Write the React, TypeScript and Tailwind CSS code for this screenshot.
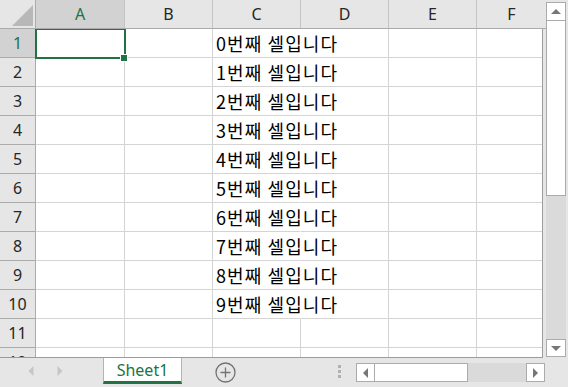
import React from "react";

/* ─── layout constants ───────────────────────────── */
const COLS = ["A", "B", "C", "D", "E", "F"];
const COL_W = ["w-[89px]", "w-[88px]", "w-[88px]", "w-[88px]", "w-[88px]", "w-[65px]"];
const ROWS = Array.from({ length: 12 }, (_, i) => i + 1);

const HEAD_FONT = { fontFamily: '"Noto Sans", "Open Sans", sans-serif' };
const CELL_FONT = { fontFamily: '"Noto Sans CJK KR", "Noto Sans", sans-serif' };

/* ─── small pieces ───────────────────────────────── */
function Tri({ dir, className }: { dir: "up" | "down" | "left" | "right"; className?: string }) {
  const pts = {
    up: "0,6 6,0 12,6",
    down: "0,0 12,0 6,6",
    left: "6,0 6,12 0,6",
    right: "0,0 0,12 6,6",
  }[dir];
  const vb = dir === "up" || dir === "down" ? "0 0 12 6" : "0 0 6 12";
  const size = dir === "up" || dir === "down" ? { width: 12, height: 6 } : { width: 6, height: 12 };
  return (
    <svg viewBox={vb} {...size} className={className}>
      <polygon points={pts} fill="currentColor" />
    </svg>
  );
}

function ScrollBtn({ dir, className }: { dir: "up" | "down" | "left" | "right"; className: string }) {
  return (
    <div className={`bg-white border border-[#ababab] flex items-center justify-center text-[#777] ${className}`}>
      <Tri dir={dir} className={dir === "up" || dir === "down" ? "w-[10px] h-[5px]" : "w-[5px] h-[10px]"} />
    </div>
  );
}

function clsxLite(...parts: (string | false | undefined)[]) {
  return parts.filter(Boolean).join(" ");
}

/* ─── grid ───────────────────────────────────────── */
function HeaderRow() {
  return (
    <div className="flex h-[29px] border-b border-[#ababab]" style={HEAD_FONT}>
      <div className="w-[36px] shrink-0 border-r border-[#ababab] relative flex items-end justify-end pr-[2px] pb-[2px]">
        <svg width="21" height="21" viewBox="0 0 21 21">
          <polygon points="21,0 21,21 0,21" fill="#b8b8b8" />
        </svg>
      </div>
      {COLS.map((c, i) => (
        <div
          key={c}
          className={clsxLite(
            "shrink-0 flex items-center justify-center text-[16px]",
            i === 5 ? "w-[69px]" : COL_W[i] + " border-r border-[#c4c4c4]",
            i === 0 ? "bg-[#d2d2d2] text-[#217346]" : "text-[#262626]"
          )}
        >
          {c}
        </div>
      ))}
    </div>
  );
}

function BodyRow({ n }: { n: number }) {
  const text = n <= 10 ? `${n - 1}번째 셀입니다` : "";
  return (
    <div className="flex h-[29px] shrink-0">
      <div
        className={clsxLite(
          "w-[36px] shrink-0 border-r border-b border-[#ababab] flex items-center justify-center text-[16px]",
          n === 1 ? "bg-[#d2d2d2] text-[#217346]" : "bg-[#e6e6e6] text-[#262626]"
        )}
        style={HEAD_FONT}
      >
        {n}
      </div>
      {COLS.map((c, i) => (
        <div
          key={c}
          className={clsxLite(
            "shrink-0 bg-white border-b border-[#d4d4d4] relative",
            COL_W[i],
            i < 5 && "border-r",
            i === 2 && text && "border-r-white"
          )}
        >
          {i === 2 && text && (
            <span
              className="absolute left-[3px] top-0 h-full flex items-center whitespace-nowrap text-[18px] tracking-[1.1px] text-black z-10"
              style={CELL_FONT}
            >
              {text}
            </span>
          )}
        </div>
      ))}
    </div>
  );
}

/* ─── MAIN PAGE ───────────────────────────────────── */
export default function App() {
  return (
    <div className="w-[568px] h-[387px] bg-[#e6e6e6] flex flex-col overflow-hidden select-none">
      {/* sheet + vertical scrollbar */}
      <div className="flex h-[358px] shrink-0">
        <div className="w-[546px] shrink-0 flex flex-col bg-[#e6e6e6]">
          <HeaderRow />
          <div className="w-[543px] flex-1 overflow-hidden border-r border-b border-[#9c9c9c] relative flex flex-col">
            {ROWS.map((n) => (
              <BodyRow key={n} n={n} />
            ))}
            {/* selection */}
            <div className="absolute left-[35px] top-[-1px] w-[91px] h-[31px] border-[2.5px] border-[#217346] pointer-events-none z-20" />
            <div className="absolute left-[120px] top-[25px] w-[8px] h-[8px] bg-[#217346] border border-white z-30" />
          </div>
        </div>
        <div className="flex-1 flex flex-col pt-[2px] pb-[1px] pr-[2px]">
          <ScrollBtn dir="up" className="h-[19px]" />
          <div className="h-[175px] bg-white border border-[#ababab] border-t-0" />
          <div className="flex-1 bg-[#dadada]" />
          <ScrollBtn dir="down" className="h-[18px]" />
        </div>
      </div>

      {/* tab bar */}
      <div className="flex h-[29px] shrink-0">
        <div className="w-[103px] shrink-0 flex items-center text-[#c6c6c6] pl-[28px] gap-[23px] pb-[4px]">
          <Tri dir="left" className="w-[6px] h-[10px]" />
          <Tri dir="right" className="w-[6px] h-[10px]" />
        </div>
        <div className="w-[79px] h-[26px] shrink-0 bg-white border-x border-[#b4b4b4] border-b-[3px] border-b-[#217346] flex items-center justify-center text-[16px] text-[#217346] pt-[1px]" style={HEAD_FONT}>
          Sheet1
        </div>
        <div className="ml-[33px] w-[21px] flex items-center pb-[1px]">
          <svg width="21" height="21" viewBox="0 0 21 21">
            <circle cx="10.5" cy="10.5" r="9.5" fill="none" stroke="#737373" strokeWidth="1.3" />
            <path d="M10.5 5.5v10M5.5 10.5h10" stroke="#737373" strokeWidth="1.3" />
          </svg>
        </div>
        <div className="ml-[102px] flex flex-col justify-center gap-[2px] pb-[3px]">
          <div className="w-[3px] h-[3px] bg-[#b0b0b0]" />
          <div className="w-[3px] h-[3px] bg-[#b0b0b0]" />
          <div className="w-[3px] h-[3px] bg-[#b0b0b0]" />
        </div>
        <div className="ml-[15px] flex items-start pt-[5px]">
          <ScrollBtn dir="left" className="w-[19px] h-[19px]" />
          <div className="w-[93px] h-[19px] bg-white border border-[#ababab] border-l-0" />
          <div className="w-[58px] h-[19px] bg-[#dadada]" />
          <ScrollBtn dir="right" className="w-[19px] h-[19px]" />
        </div>
      </div>
    </div>
  );
}
